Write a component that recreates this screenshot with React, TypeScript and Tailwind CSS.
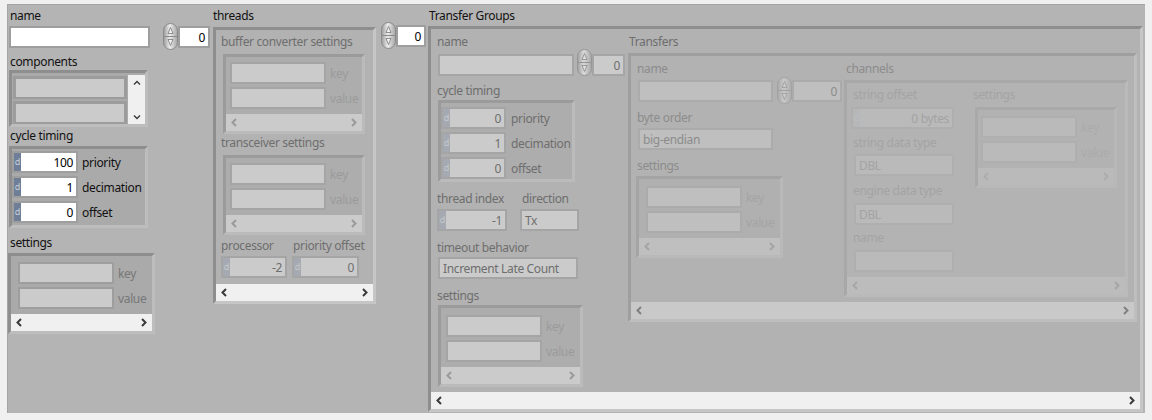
import { useId } from "react";

type Tone = {
  lab: string;
  val: string;
  box: string;
  edge: string;
  radix: string;
  sub: string;
  sbar: string;
  chev: string;
  frame: string;
};

const F = "font-['Noto_Sans',sans-serif] text-[12px] tracking-[-0.35px]";

// enabled controls
const T0: Tone = {
  lab: "text-[#111111]",
  val: "text-[#000000]",
  box: "bg-[#ffffff]",
  edge: "border-[#9e9e9e]",
  radix: "bg-[#6e7e97] text-[#c9d0dc]",
  sub: "text-[#777777]",
  sbar: "bg-[#f0f0f0]",
  chev: "#3a3a3a",
  frame: "bg-[#aaaaaa] border-t-[#8e8e8e] border-l-[#8e8e8e] border-r-[#bdbdbd] border-b-[#bdbdbd]",
};
// empty array elements on the left
const TA: Tone = { ...T0, box: "bg-[#cbcbcb]" };
// disabled (threads / transfer groups)
const T1: Tone = {
  lab: "text-[#6e6e6e]",
  val: "text-[#6e6e6e]",
  box: "bg-[#cbcbcb]",
  edge: "border-[#a5a5a5]",
  radix: "bg-[#a5a9b1] text-[#c6c9ce]",
  sub: "text-[#9b9b9b]",
  sbar: "bg-[#cbcbcb]",
  chev: "#9a9a9a",
  frame: "bg-[#adadad] border-t-[#9b9b9b] border-l-[#9b9b9b] border-r-[#bbbbbb] border-b-[#bbbbbb]",
};
// transfers
const T2: Tone = {
  lab: "text-[#8c8c8c]",
  val: "text-[#8c8c8c]",
  box: "bg-[#bfbfbf]",
  edge: "border-[#ababab]",
  radix: "bg-[#b1b4b9] text-[#c2c4c7]",
  sub: "text-[#a4a4a4]",
  sbar: "bg-[#bfbfbf]",
  chev: "#a4a4a4",
  frame: "bg-[#b0b0b0] border-t-[#a4a4a4] border-l-[#a4a4a4] border-r-[#b9b9b9] border-b-[#b9b9b9]",
};
// channels
const T3: Tone = {
  lab: "text-[#a3a3a3]",
  val: "text-[#a3a3a3]",
  box: "bg-[#bababa]",
  edge: "border-[#afafaf]",
  radix: "bg-[#b6b7b9] text-[#bdbdbd]",
  sub: "text-[#ababab]",
  sbar: "bg-[#bababa]",
  chev: "#adadad",
  frame: "bg-[#b2b2b2] border-t-[#a9a9a9] border-l-[#a9a9a9] border-r-[#b8b8b8] border-b-[#b8b8b8]",
};

const OUT = "bg-[#b2b2b2] border-t-[#8e8e8e] border-l-[#8e8e8e] border-r-[#c6c6c6] border-b-[#c6c6c6]";
const MID = "bg-[#b2b2b2] border-t-[#9f9f9f] border-l-[#9f9f9f] border-r-[#bebebe] border-b-[#bebebe]";
const CH = "bg-[#b3b3b3] border-t-[#a8a8a8] border-l-[#a8a8a8] border-r-[#bababa] border-b-[#bababa]";

function Label({ t, className = "", children }: { t: Tone; className?: string; children: React.ReactNode }) {
  return <div className={`h-[16px] leading-[18px] whitespace-nowrap ${t.lab} ${className}`}>{children}</div>;
}

function Str({ t, className = "", value = "" }: { t: Tone; className?: string; value?: string }) {
  return (
    <div className={`h-[22px] border-2 ${t.edge} ${className}`}>
      <div className={`h-full ${t.box} ${t.val} leading-[19px] pl-[3px] whitespace-nowrap overflow-hidden`}>{value}</div>
    </div>
  );
}

function Num({ t, className = "", value }: { t: Tone; className?: string; value: string }) {
  return (
    <div className={`h-[22px] border-2 ${t.edge} flex ${className}`}>
      <div className={`w-[7px] shrink-0 ${t.radix} text-[9px] leading-[18px] text-center tracking-normal`}>d</div>
      <div className={`flex-1 ${t.box} ${t.val} leading-[19px] text-right pr-[3px] whitespace-nowrap`}>{value}</div>
    </div>
  );
}

function Idx({ t, className = "", value }: { t: Tone; className?: string; value: string }) {
  return (
    <div className={`h-[22px] border-2 ${t.edge} ${className}`}>
      <div className={`h-full ${t.box} ${t.val} leading-[19px] text-right pr-[3px]`}>{value}</div>
    </div>
  );
}

function Spin({ className = "" }: { className?: string }) {
  const id = "g" + useId().replace(/[^a-zA-Z0-9]/g, "");
  return (
    <svg width="15" height="27" viewBox="0 0 15 27" className={`shrink-0 ${className}`}>
      <defs>
        <linearGradient id={id} x1="0" x2="1" y1="0" y2="0">
          <stop offset="0" stopColor="#9a9a9a" />
          <stop offset="0.45" stopColor="#ececec" />
          <stop offset="1" stopColor="#a4a4a4" />
        </linearGradient>
      </defs>
      <rect x="0.5" y="0.5" width="14" height="26" rx="7" fill={`url(#${id})`} stroke="#8a8a8a" />
      <line x1="1" y1="13.5" x2="14" y2="13.5" stroke="#8a8a8a" />
      <path d="M7.5 4.5 L10 10.5 H5 Z" fill="#f2f2f2" stroke="#777777" strokeWidth="0.8" />
      <path d="M7.5 22.5 L10 16.5 H5 Z" fill="#f2f2f2" stroke="#777777" strokeWidth="0.8" />
    </svg>
  );
}

function HBar({ bg, chev, className = "" }: { bg: string; chev: string; className?: string }) {
  return (
    <div className={`h-[17px] flex items-center justify-between px-[5px] ${bg} ${className}`}>
      <svg width="6" height="9" viewBox="0 0 6 9">
        <path d="M5 1 L1.5 4.5 L5 8" fill="none" stroke={chev} strokeWidth="2" />
      </svg>
      <svg width="6" height="9" viewBox="0 0 6 9">
        <path d="M1 1 L4.5 4.5 L1 8" fill="none" stroke={chev} strokeWidth="2" />
      </svg>
    </div>
  );
}

function KV({ t, className = "", pt, pl }: { t: Tone; className?: string; pt: string; pl: string }) {
  return (
    <div className={`border-[3px] ${t.frame} ${className}`}>
      <div className={`${pt} ${pl} pb-[5px]`}>
        <div className="flex items-center">
          <Str t={t} className="w-[96px]" />
          <span className={`ml-[4px] leading-[19px] ${t.sub}`}>key</span>
        </div>
        <div className="flex items-center mt-[3px]">
          <Str t={t} className="w-[96px]" />
          <span className={`ml-[4px] leading-[19px] ${t.sub}`}>value</span>
        </div>
      </div>
      <HBar bg={t.sbar} chev={t.chev} />
    </div>
  );
}

function NumRow({ t, w, gap, value, label }: { t: Tone; w: string; gap: string; value: string; label: string }) {
  return (
    <div className="flex items-center">
      <Num t={t} className={w} value={value} />
      <span className={`${gap} leading-[19px] ${t.lab}`}>{label}</span>
    </div>
  );
}

export default function App() {
  return (
    <div className={`w-[1152px] h-[420px] bg-[#f0f0f0] pt-[4px] pl-[7px] ${F}`}>
      <div className="w-[1138px] h-[409px] bg-[#b4b4b4] border-l border-t border-[#a4a4a4] flex items-start">
        {/* left cluster */}
        <div className="w-[148px] mt-[2px] flex flex-col items-start">
          <Label t={T0} className="ml-[2px]">name</Label>
          <Str t={T0} className="ml-[1px] mt-[3px] w-[141px]" />
          <Label t={T0} className="ml-[2px] mt-[5px]">components</Label>
          <div className={`ml-[1px] mt-[1px] w-[139px] h-[57px] border-[3px] ${T0.frame} flex`}>
            <div className="pl-[1px] pt-[3px] flex flex-col gap-[2px]">
              <div className="w-[114px] h-[23px] border-[3px] border-b-2 border-[#9c9c9c] bg-[#cbcbcb]" />
              <div className="w-[114px] h-[23px] border-[3px] border-b-2 border-[#9c9c9c] bg-[#cbcbcb]" />
            </div>
            <div className="ml-[1px] mt-[2px] w-[17px] h-[49px] bg-[#f0f0f0] flex flex-col items-center justify-between pt-[5px] pb-[4px]">
              <svg width="8" height="5" viewBox="0 0 8 5">
                <path d="M1 4.5 L4 1.5 L7 4.5" fill="none" stroke="#3a3a3a" strokeWidth="1.4" />
              </svg>
              <svg width="8" height="5" viewBox="0 0 8 5">
                <path d="M1 0.5 L4 3.5 L7 0.5" fill="none" stroke="#3a3a3a" strokeWidth="1.4" />
              </svg>
            </div>
          </div>
          <Label t={T0} className="ml-[2px]">cycle timing</Label>
          <div className={`ml-[1px] mt-[3px] w-[139px] border-[3px] ${T0.frame} pt-[2px] pb-[2px] flex flex-col gap-[3px]`}>
            <NumRow t={T0} w="w-[66px]" gap="ml-[4px]" value="100" label="priority" />
            <NumRow t={T0} w="w-[66px]" gap="ml-[4px]" value="1" label="decimation" />
            <NumRow t={T0} w="w-[66px]" gap="ml-[4px]" value="0" label="offset" />
          </div>
          <Label t={T0} className="ml-[2px] mt-[6px]">settings</Label>
          <KV t={TA} className="mt-[3px] w-[147px]" pt="pt-[6px]" pl="pl-[7px]" />
        </div>

        {/* index */}
        <div className="ml-[7px] mt-[18px] flex items-center">
          <Spin />
          <Idx t={T0} className="w-[32px]" value="0" />
        </div>

        {/* threads */}
        <div className="ml-[3px] mt-[2px] flex flex-col items-start">
          <Label t={T0}>threads</Label>
          <div className={`mt-[4px] w-[163px] border-[3px] ${OUT}`}>
            <div className="pl-[5px] pt-[3px] flex flex-col items-start">
              <Label t={T1}>buffer converter settings</Label>
              <KV t={T1} className="ml-[2px] mt-[5px] w-[142px]" pt="pt-[5px]" pl="pl-[4px]" />
              <Label t={T1}>transceiver settings</Label>
              <KV t={T1} className="ml-[2px] mt-[5px] w-[142px]" pt="pt-[5px]" pl="pl-[4px]" />
              <div className="mt-[2px] flex">
                <Label t={T1} className="w-[72px]">processor</Label>
                <Label t={T1}>priority offset</Label>
              </div>
              <div className="mt-[3px] flex">
                <Num t={T1} className="w-[66px]" value="-2" />
                <Num t={T1} className="ml-[5px] w-[67px]" value="0" />
              </div>
            </div>
            <HBar bg="bg-[#f0f0f0]" chev="#3a3a3a" className="mt-[6px]" />
          </div>
        </div>

        {/* index */}
        <div className="ml-[5px] mt-[17px] flex items-center">
          <Spin />
          <Idx t={T0} className="w-[30px]" value="0" />
        </div>

        {/* transfer groups */}
        <div className="ml-[2px] mt-[2px] flex flex-col items-start">
          <Label t={T0} className="ml-[1px]">Transfer Groups</Label>
          <div className={`mt-[3px] w-[715px] border-[3px] ${OUT}`}>
            <div className="h-[363px] pl-[6px] flex items-start">
              <div className="w-[191px] flex flex-col items-start">
                <Label t={T1} className="mt-[4px]">name</Label>
                <div className="flex items-end">
                  <Str t={T1} className="ml-[1px] w-[136px]" />
                  <Spin className="ml-[3px] opacity-70" />
                  <Idx t={T1} className="w-[33px]" value="0" />
                </div>
                <Label t={T1} className="mt-[6px]">cycle timing</Label>
                <div className={`ml-[1px] mt-[2px] w-[137px] border-[3px] ${T1.frame} pt-[4px] flex flex-col gap-[3px]`}>
                  <NumRow t={T1} w="w-[65px]" gap="ml-[5px]" value="0" label="priority" />
                  <NumRow t={T1} w="w-[65px]" gap="ml-[5px]" value="1" label="decimation" />
                  <NumRow t={T1} w="w-[65px]" gap="ml-[5px]" value="0" label="offset" />
                </div>
                <div className="mt-[8px] flex">
                  <Label t={T1} className="w-[85px]">thread index</Label>
                  <Label t={T1}>direction</Label>
                </div>
                <div className="mt-[3px] flex">
                  <Num t={T1} className="w-[70px]" value="-1" />
                  <Str t={T1} className="ml-[13px] w-[59px]" value="Tx" />
                </div>
                <Label t={T1} className="mt-[8px]">timeout behavior</Label>
                <Str t={T1} className="ml-[1px] mt-[2px] w-[140px]" value="Increment Late Count" />
                <Label t={T1} className="mt-[8px]">settings</Label>
                <KV t={T1} className="ml-[1px] mt-[2px] w-[145px]" pt="pt-[7px]" pl="pl-[5px]" />
              </div>

              {/* transfers */}
              <div className="flex flex-col items-start">
                <Label t={T1} className="ml-[1px] mt-[4px]">Transfers</Label>
                <div className={`mt-[4px] w-[509px] border-[3px] ${MID}`}>
                  <div className="h-[246px] pl-[5px] flex items-start">
                    <div className="w-[208px] flex flex-col items-start">
                      <Label t={T2} className="ml-[1px] mt-[4px]">name</Label>
                      <div className="mt-[1px] flex items-center">
                        <Str t={T2} className="ml-[2px] w-[135px]" />
                        <Spin className="ml-[4px] opacity-40" />
                        <Idx t={T2} className="w-[50px]" value="0" />
                      </div>
                      <Label t={T2} className="ml-[1px] mt-[5px]">byte order</Label>
                      <Str t={T2} className="ml-[2px] mt-[3px] w-[135px]" value="big-endian" />
                      <Label t={T2} className="ml-[1px] mt-[7px]">settings</Label>
                      <KV t={T2} className="mt-[3px] w-[147px]" pt="pt-[7px]" pl="pl-[7px]" />
                    </div>

                    {/* channels */}
                    <div className="flex flex-col items-start">
                      <Label t={T2} className="ml-[2px] mt-[4px]">channels</Label>
                      <div className={`mt-[4px] w-[284px] border-[3px] ${CH}`}>
                        <div className="h-[194px] flex items-start">
                          <div className="pl-[4px] w-[125px] flex flex-col items-start">
                            <Label t={T3} className="ml-[2px] mt-[3px]">string offset</Label>
                            <Num t={T3} className="mt-[5px] w-[103px]" value="0 bytes" />
                            <Label t={T3} className="ml-[2px] mt-[5px]">string data type</Label>
                            <Str t={T3} className="ml-[3px] mt-[4px] w-[100px]" value="DBL" />
                            <Label t={T3} className="ml-[2px] mt-[6px]">engine data type</Label>
                            <Str t={T3} className="ml-[3px] mt-[5px] w-[100px]" value="DBL" />
                            <Label t={T3} className="ml-[2px] mt-[4px]">name</Label>
                            <Str t={T3} className="ml-[3px] mt-[5px] w-[100px]" />
                          </div>
                          <div className="flex flex-col items-start">
                            <Label t={T3} className="ml-[1px] mt-[3px]">settings</Label>
                            <KV t={T3} className="ml-[3px] mt-[5px] w-[142px]" pt="pt-[6px]" pl="pl-[3px]" />
                          </div>
                        </div>
                        <HBar bg="bg-[#bcbcbc]" chev="#a6a6a6" />
                      </div>
                    </div>
                  </div>
                  <HBar bg="bg-[#c9c9c9]" chev="#808080" />
                </div>
              </div>
            </div>
            <HBar bg="bg-[#f0f0f0]" chev="#3a3a3a" />
          </div>
        </div>
      </div>
    </div>
  );
}
